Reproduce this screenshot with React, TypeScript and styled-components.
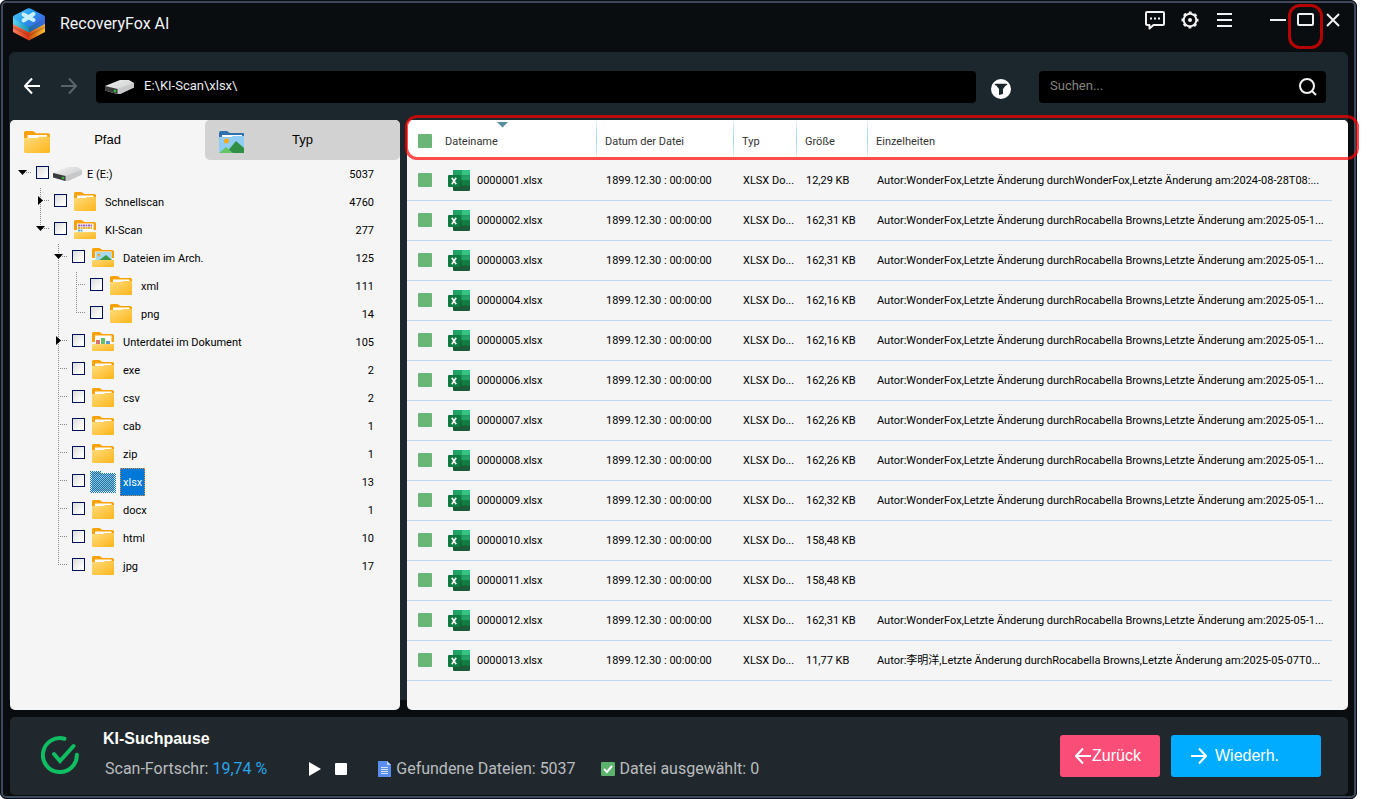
import React from 'react';
import styled, { createGlobalStyle, css } from 'styled-components';

const tahoma = 'Tahoma, Roboto, "Noto Sans CJK SC", sans-serif';
const arial = '"Liberation Sans", Arial, sans-serif';

const GlobalStyle = createGlobalStyle`
  *, *::before, *::after { box-sizing: border-box; }
  body { margin: 0; background: #fff; font-family: ${tahoma}; font-size: 11px; line-height: 14px; color: #000; }
  button, input { font: inherit; margin: 0; }
  svg { display: block; flex: none; }
`;

const Window = styled.div`
  display: flex;
  flex-direction: column;
  min-height: 100vh;
  margin-right: 42px;
  padding: 0 8px 0 7px;
  background: #090d10;
  border: 1px solid #0a0d14;
  border-radius: 6px;
  box-shadow: inset 0 0 0 2px #3e495c;
`;

const TitleBar = styled.header`
  display: flex;
  align-items: center;
  height: 51px;
  padding: 0 6px 5px 4px;
`;

const AppName = styled.h1`
  flex: 1;
  margin: 0 0 0 14px;
  font: 400 16px/20px Roboto, sans-serif;
  color: #f2f4f6;
`;

const WindowTools = styled.div`
  display: flex;
  align-items: center;
  gap: 15px;
  padding-bottom: 9px;
`;

const WindowButtons = styled.div`
  display: flex;
  align-items: center;
  gap: 9px;
  margin-left: 34px;
  padding-bottom: 9px;
`;

const IconButton = styled.button<{ $w?: number }>`
  position: relative;
  display: grid;
  place-items: center;
  flex: none;
  width: ${(p) => p.$w ?? 20}px;
  height: 20px;
  padding: 0;
  border: 0;
  background: transparent;
  color: #f2f2f2;
`;

const mark = css`
  position: absolute;
  border: 3px solid rgba(255, 0, 0, 0.7);
  border-radius: 12px;
  pointer-events: none;
`;

const ButtonMark = styled.span`
  ${mark}
  inset: -6px -8px -19px;
`;

const HeaderMark = styled.span`
  ${mark}
  top: -5px;
  left: -2px;
  right: -11px;
  height: 45px;
`;

const Body = styled.main`
  display: flex;
  flex-direction: column;
  flex: 1;
  margin-left: 1px;
  background: linear-gradient(#1b262d, #1b262d) top / 100% calc(100% - 10px) no-repeat;
  border-radius: 6px 6px 0 0;
`;

const Toolbar = styled.div`
  display: flex;
  align-items: center;
  height: 68px;
  padding: 2px 22px 0 13px;
`;

const NavButton = styled(IconButton)<{ $dim?: boolean }>`
  margin: 0 17px 2px 0;
  color: ${(p) => (p.$dim ? '#59636b' : '#fff')};
`;

const Field = styled.div<{ $grow: number }>`
  display: flex;
  align-items: center;
  flex: ${(p) => `${p.$grow} 1 ${p.$grow}px`};
  min-width: 0;
  height: 32px;
  padding: 0 8px;
  border-radius: 4px;
  background: #000;
`;

const FieldInput = styled.input`
  flex: 1;
  min-width: 0;
  height: 24px;
  padding: 0 0 4px;
  border: 0;
  outline: 0;
  background: transparent;
  font-size: 13px;
  color: #e8ecef;
  &::placeholder { color: #85837c; opacity: 1; }
`;

const PathField = styled(Field)`
  padding-left: 9px;
  ${FieldInput} { margin-left: 8px; }
`;

const SearchField = styled(Field)`
  padding-left: 11px;
`;

const FilterButton = styled(IconButton)`
  margin: 3px 28px 0 15px;
`;

const Panels = styled.div`
  display: flex;
  flex: 1;
  gap: 7px;
`;

const TreePanel = styled.section`
  flex: none;
  width: 390px;
  margin-left: 1px;
  border-radius: 5px;
  background: #f5f5f5;
`;

const Tabs = styled.div`
  display: flex;
  height: 40px;
`;

const Tab = styled.button<{ $on?: boolean }>`
  position: relative;
  flex: 1;
  padding: 0;
  border: 0;
  border-radius: 5px;
  background: ${(p) => (p.$on ? '#f5f5f5' : '#d2d2d2')};
  font: 400 13px/20px ${arial};
  color: #000;
  display: grid;
  grid-template-columns: 40px 1fr 40px;
  align-items: center;
  justify-items: center;
  svg { justify-self: end; margin-top: 4px; }
`;

const Tree = styled.ul`
  margin: 0;
  padding: 0 26px 0 4px;
  list-style: none;
`;

const TreeRow = styled.li`
  display: flex;
  align-items: center;
  height: 28px;
`;

const Guide = styled.span<{ $line?: 'through' | 'end'; $dash?: boolean }>`
  position: relative;
  flex: none;
  width: 18px;
  height: 28px;
  &::before {
    content: '';
    display: ${(p) => (p.$line ? 'block' : 'none')};
    position: absolute;
    left: 8px;
    top: 0;
    width: 1px;
    height: ${(p) => (p.$line === 'end' ? 13 : 28)}px;
    background: repeating-linear-gradient(#8c8c8c 0 1px, transparent 1px 2px);
  }
  &::after {
    content: '';
    display: ${(p) => (p.$dash ? 'block' : 'none')};
    position: absolute;
    left: 8px;
    top: 12px;
    width: 10px;
    height: 1px;
    background: repeating-linear-gradient(90deg, #8c8c8c 0 1px, transparent 1px 2px);
  }
  svg { position: absolute; left: 4px; top: 7px; z-index: 1; }
`;

const TreeCheck = styled.input`
  appearance: none;
  flex: none;
  width: 13px;
  height: 13px;
  margin: 0 4px 3px;
  border: 1px solid #00105c;
  background: linear-gradient(135deg, #dcdcda, #fff 85%);
`;

const TreeLabel = styled.label<{ $on?: boolean }>`
  height: 28px;
  padding: 0 3px;
  line-height: 29px;
  white-space: nowrap;
  ${(p) =>
    p.$on &&
    css`
      background: #0078d7;
      color: #fff;
      outline: 1px dotted #e08a3c;
      outline-offset: -1px;
    `}
`;

const Count = styled.span`
  margin-left: auto;
  height: 28px;
  line-height: 29px;
`;

const FilePanel = styled.section`
  position: relative;
  flex: 1;
  min-width: 0;
  border-radius: 5px;
  background: #f5f5f5;
`;

const Table = styled.table`
  width: 100%;
  table-layout: fixed;
  border-collapse: separate;
  border-spacing: 0;
`;

const Col = styled.col<{ $w?: number }>`
  width: ${(p) => (p.$w ? `${p.$w}px` : 'auto')};
`;

const HeadCell = styled.th<{ $divided?: boolean }>`
  position: relative;
  height: 41px;
  padding: 2px 0 0 ${(p) => (p.$divided ? 8 : 0)}px;
  background: linear-gradient(#fff, #fff) top / 100% 39px no-repeat;
  font-weight: 400;
  text-align: left;
  color: #333;
  &:first-child { border-top-left-radius: 5px; }
  &:last-child { border-top-right-radius: 5px; }
  &::before {
    content: '';
    display: ${(p) => (p.$divided ? 'block' : 'none')};
    position: absolute;
    left: -1px;
    top: 1px;
    width: 1px;
    height: 36px;
    background: linear-gradient(#e4f3fa, #9fd3ea 50%, #e4f3fa);
  }
`;

const SortMark = styled.svg`
  position: absolute;
  top: 2px;
  left: 52px;
`;

const Cell = styled.td`
  height: 40px;
  padding: 0 0 0 9px;
  border-bottom: 1px solid #c0d8f4;
  white-space: nowrap;
  &:first-child, &:nth-child(2) { padding-left: 0; }
`;

const RowCheck = styled.input`
  appearance: none;
  display: block;
  width: 14px;
  height: 14px;
  margin: 0 0 1px 11px;
  border-radius: 1px;
  background: #6bb577;
`;

const FileName = styled.label`
  display: flex;
  align-items: center;
  gap: 7px;
  padding-left: 3px;
`;

const Footer = styled.footer`
  display: flex;
  align-items: center;
  height: 78px;
  margin: 7px 0 3px 2px;
  padding: 0 27px 0 31px;
  border-radius: 5px;
  background: #21282d;
  > svg { margin-bottom: 2px; }
`;

const Status = styled.div`
  flex: 1;
  margin-left: 24px;
  padding-bottom: 5px;
  font: 400 16px/24px Roboto, sans-serif;
  color: #b9bcbe;
  white-space: nowrap;
`;

const StatusTitle = styled.h2`
  margin: 0 0 6px;
  font: 700 16px/24px ${arial};
  color: #fff;
`;

const StatusLine = styled.div`
  display: flex;
  align-items: center;
  padding-left: 2px;
`;

const Percent = styled.span`
  margin-left: 4px;
  color: #2ba3ea;
`;

const ScanControls = styled.div`
  display: flex;
  gap: 6px;
  margin: 0 26px 0 38px;
`;

const Stat = styled.span`
  display: flex;
  align-items: center;
  gap: 5px;
  & + & { margin-left: 25px; }
`;

const ActionButton = styled.button<{ $tone: string; $w: number; $gap: number; $pad: number }>`
  display: flex;
  align-items: center;
  gap: ${(p) => p.$gap}px;
  width: ${(p) => p.$w}px;
  height: 42px;
  margin-left: 11px;
  padding: 0 0 0 ${(p) => p.$pad}px;
  border: 0;
  border-radius: 3px;
  background: ${(p) => p.$tone};
  font-family: ${arial};
  font-size: 16px;
  color: #fff;
`;

const Logo = () => (
  <svg width="34" height="34" viewBox="0 0 34 34" aria-hidden="true">
    <defs>
      <linearGradient id="lgTop" x1="0" y1="0" x2="1" y2="0.6">
        <stop offset="0" stopColor="#5cc4f6" />
        <stop offset="0.55" stopColor="#1f9df0" />
        <stop offset="1" stopColor="#4463e0" />
      </linearGradient>
      <linearGradient id="lgMid" x1="0" x2="1">
        <stop offset="0" stopColor="#5ad5f2" />
        <stop offset="0.5" stopColor="#1590b0" />
        <stop offset="0.51" stopColor="#1e6f9c" />
        <stop offset="1" stopColor="#3e66e0" />
      </linearGradient>
      <linearGradient id="lgLow" x1="0" x2="1">
        <stop offset="0" stopColor="#f98060" />
        <stop offset="0.5" stopColor="#dc3210" />
        <stop offset="0.51" stopColor="#d24a10" />
        <stop offset="1" stopColor="#f8c334" />
      </linearGradient>
    </defs>
    <path d="M1 17H33V25L17 33.500 1 25Z" fill="url(#lgLow)" />
    <path d="M1 19 17 27.500 33 19V21L17 29.500 1 21Z" fill="#8f2f16" opacity=".35" />
    <path d="M1 10H33V17L17 25.500 1 17Z" fill="url(#lgMid)" />
    <path d="M15.500 1.500Q17 .8 18.500 1.500L32 8.500Q34 10 32 11.500L18.500 19.500Q17 20.300 15.500 19.500L2 11.500Q0 10 2 8.500Z" fill="url(#lgTop)" />
    <path d="M11.500 7.500 21.500 13M21.500 7 11.500 13.500" stroke="#c8f0ff" strokeWidth="4" strokeLinecap="round" />
  </svg>
);

const ChatIcon = () => (
  <svg width="20" height="20" viewBox="0 0 20 20" fill="none" stroke="currentColor" strokeWidth="2" aria-hidden="true">
    <path d="M2 2H18Q19 2 19 3V14Q19 15 18 15H8.500L4.500 18.500V15H2Q1 15 1 14V3Q1 2 2 2Z" strokeLinejoin="round" />
    <path d="M5 8.500h2M9 8.500h2M13 8.500h2" />
  </svg>
);

const GearIcon = () => (
  <svg width="18" height="18" viewBox="0 0 18 18" fill="none" stroke="currentColor" aria-hidden="true">
    <circle cx="9" cy="9" r="6.300" strokeWidth="2" />
    <circle cx="9" cy="9" r="7.500" strokeWidth="2" strokeDasharray="3 2.890" strokeDashoffset="1.500" />
    <circle cx="9" cy="9" r="2" fill="currentColor" stroke="none" />
  </svg>
);

const ArrowIcon = ({ right }: { right?: boolean }) => (
  <svg width="16" height="18" viewBox="0 0 16 18" fill="none" stroke="currentColor" strokeWidth="2" aria-hidden="true">
    <path d={right ? 'M0 9H15M8 1.500 15 9 8 16.500' : 'M16 9H1M8 1.500 1 9 8 16.500'} />
  </svg>
);

const DriveIcon = () => (
  <svg width="31" height="16" viewBox="0 0 31 16" aria-hidden="true">
    <defs>
      <linearGradient id="drv" x1="0" y1="0" x2="1" y2="1">
        <stop offset="0" stopColor="#f2f2f2" />
        <stop offset="1" stopColor="#c4c5c7" />
      </linearGradient>
    </defs>
    <path d="M0 7 15 1H24L29 4V8.500L15 15H12L0 11.500Z" fill="url(#drv)" />
    <path d="M0 7 12.500 10 29 4V8.500L15 15H12Z" fill="#c6c8ca" />
    <path d="M0 7 12.500 10V15L0 11.500Z" fill="#3a3c3d" />
    <circle cx="10" cy="12" r="1.300" fill="#2fc02f" />
  </svg>
);

type FolderKind = 'plain' | 'grid' | 'photo' | 'chart' | 'selected';

/* Selection checkerboard laid over a folder, one dotted line per pixel row. */
const Checkerboard = () => (
  <g stroke="#0078d7" strokeDasharray="1 1" shapeRendering="crispEdges">
    {Array.from({ length: 22 }, (_, row) => (
      <path key={row} d={`M${-2 + (row % 2)} ${row - 0.5}H${row < 2 ? 9 : 24}`} />
    ))}
  </g>
);

const FolderShapes = ({ kind }: { kind: FolderKind }) => {
  const tall = kind === 'grid' || kind === 'photo' || kind === 'chart';
  return (
    <>
      <defs>
        <linearGradient id="fold" x1="0" y1="0" x2="1" y2="1">
          <stop offset="0" stopColor="#ffdc7c" />
          <stop offset="1" stopColor="#fdb51b" />
        </linearGradient>
      </defs>
      <path d="M0 1.500Q0 0 1.500 0H7Q8 0 9 1L10.500 2H20.500Q22 2 22 3.500V10H0Z" fill="#f7a20b" />
      <rect x="3" y="3.500" width="16.500" height={tall ? 9 : 4} fill="#fff" />
      {kind === 'grid' && (
        <>
          <path d="M4 5.500H18" stroke="#9a63b8" strokeWidth="2" strokeDasharray="2 .500" />
          <path d="M4 8H18" stroke="#e2b33c" strokeWidth="2" strokeDasharray="2 .500" />
          <path d="M4 10.500H9" stroke="#5fa8d8" strokeWidth="2" strokeDasharray="2 .500" />
        </>
      )}
      {kind === 'photo' && (
        <>
          <rect x="3.500" y="4" width="16" height="9" fill="#a5d8f3" />
          <path d="M6 13 14 7 20 12V13Z" fill="#3a9a4a" />
          <circle cx="7" cy="7" r="1.500" fill="#f2a625" />
        </>
      )}
      {kind === 'chart' && (
        <>
          <rect x="4" y="8" width="4" height="5" fill="#d9756f" />
          <rect x="9" y="6" width="4" height="7" fill="#63c067" />
          <rect x="14" y="9" width="4" height="4" fill="#5f93cf" />
        </>
      )}
      <path
        d={tall ? 'M0 12H22V18Q22 19 21 19H1Q0 19 0 18Z' : 'M0 6H11L13 5H22V18Q22 19 21 19H1Q0 19 0 18Z'}
        fill="url(#fold)"
      />
      {kind === 'selected' && (
        <>
          <path d="M0 0H8L10.500 2H22V19H0Z" fill="#7fb4c8" opacity=".75" />
          <Checkerboard />
        </>
      )}
    </>
  );
};

const FolderIcon = ({ kind }: { kind: FolderKind }) => (
  <svg width="31" height="24" viewBox="-3 -2 31 24" aria-hidden="true">
    <FolderShapes kind={kind} />
  </svg>
);

const PhotoFolderIcon = () => (
  <svg width="26" height="23" viewBox="0 0 26 23" aria-hidden="true">
    <path d="M0 2Q0 0 2 0H8L11 2H24Q25 2 25 3V8H0Z" fill="#3070ad" />
    <rect x="3" y="4" width="20" height="4" fill="#fff" />
    <path d="M0 6H12L14 5H25V22H0Z" fill="#8fcdf5" />
    <circle cx="7.500" cy="10" r="2.500" fill="#f7a81c" />
    <path d="M7 22 17 10 25 17V22Z" fill="#2f8f43" />
    <path d="M0 22 7 16 14 22Z" fill="#64c466" />
  </svg>
);

const ExcelIcon = () => (
  <svg width="22" height="21" viewBox="0 0 22 21" aria-hidden="true">
    <rect x="5" width="17" height="21" rx="1" fill="#1a5c38" />
    <path d="M6 0H13.500V5.500H5V1Q5 0 6 0Z" fill="#21a366" />
    <path d="M13.500 0H21Q22 0 22 1V5.500H13.500Z" fill="#33c481" />
    <rect x="5" y="5.500" width="8.500" height="5" fill="#107c41" />
    <rect x="13.500" y="5.500" width="8.500" height="5" fill="#21a366" />
    <rect x="13.500" y="10.500" width="8.500" height="5" fill="#107c41" />
    <rect x="0" y="5" width="12" height="12" rx="1" fill="#0f7a40" />
    <path d="M3.800 7.800 8.200 14.200M8.200 7.800 3.800 14.200" stroke="#fff" strokeWidth="1.600" />
  </svg>
);

const SuccessIcon = () => (
  <svg width="38" height="38" viewBox="0 0 38 38" fill="none" stroke="#0fbd62" strokeWidth="4" strokeLinecap="round" aria-hidden="true">
    <path d="M23.500 2.700A17 17 0 1 0 35.900 18.800" />
    <path d="M13 18 19 25 32.500 10" />
  </svg>
);

interface Node {
  label: string;
  count: number;
  depth: number;
  line?: 'through' | 'end';
  toggle?: 'open' | 'closed';
  icon: FolderKind | 'drive';
  selected?: boolean;
}

const nodes: Node[] = [
  { label: 'E (E:)', count: 5037, depth: 0, toggle: 'open', icon: 'drive' },
  { label: 'Schnellscan', count: 4760, depth: 1, line: 'through', toggle: 'closed', icon: 'plain' },
  { label: 'KI-Scan', count: 277, depth: 1, line: 'end', toggle: 'open', icon: 'grid' },
  { label: 'Dateien im Arch.', count: 125, depth: 2, line: 'through', toggle: 'open', icon: 'photo' },
  { label: 'xml', count: 111, depth: 3, line: 'through', icon: 'plain' },
  { label: 'png', count: 14, depth: 3, line: 'end', icon: 'plain' },
  { label: 'Unterdatei im Dokument', count: 105, depth: 2, line: 'through', toggle: 'closed', icon: 'chart' },
  { label: 'exe', count: 2, depth: 2, line: 'through', icon: 'plain' },
  { label: 'csv', count: 2, depth: 2, line: 'through', icon: 'plain' },
  { label: 'cab', count: 1, depth: 2, line: 'through', icon: 'plain' },
  { label: 'zip', count: 1, depth: 2, line: 'through', icon: 'plain' },
  { label: 'xlsx', count: 13, depth: 2, line: 'through', icon: 'selected', selected: true },
  { label: 'docx', count: 1, depth: 2, line: 'through', icon: 'plain' },
  { label: 'html', count: 10, depth: 2, line: 'through', icon: 'plain' },
  { label: 'jpg', count: 17, depth: 2, line: 'end', icon: 'plain' },
];

const rocabella = 'Autor:WonderFox,Letzte Änderung durchRocabella Browns,Letzte Änderung am:2025-05-1...';

const files: [string, string][] = [
  ['12,29 KB', 'Autor:WonderFox,Letzte Änderung durchWonderFox,Letzte Änderung am:2024-08-28T08:...'],
  ['162,31 KB', rocabella],
  ['162,31 KB', rocabella],
  ['162,16 KB', rocabella],
  ['162,16 KB', rocabella],
  ['162,26 KB', rocabella],
  ['162,26 KB', rocabella],
  ['162,26 KB', rocabella],
  ['162,32 KB', rocabella],
  ['158,48 KB', ''],
  ['158,48 KB', ''],
  ['162,31 KB', rocabella],
  ['11,77 KB', 'Autor:李明洋,Letzte Änderung durchRocabella Browns,Letzte Änderung am:2025-05-07T0...'],
];

const TreeItem = ({ node }: { node: Node }) => {
  const id = `node-${node.label.replace(/\W+/g, '-')}`;
  const insideOpenBranch = node.depth === 3;
  return (
    <TreeRow>
      {Array.from({ length: node.depth }, (_, level) => (
        <Guide key={level} $line={insideOpenBranch && level === 2 ? 'through' : undefined} />
      ))}
      <Guide $line={node.line} $dash>
        {node.toggle && (
          <svg width="10" height="11" viewBox="0 0 10 11" aria-hidden="true">
            <path d={node.toggle === 'open' ? 'M0 3H9L4.500 8Z' : 'M2 1V10L7 5.500Z'} />
          </svg>
        )}
      </Guide>
      <TreeCheck type="checkbox" id={id} />
      {node.icon === 'drive' ? <DriveIcon /> : <FolderIcon kind={node.icon} />}
      <TreeLabel htmlFor={id} $on={node.selected}>{node.label}</TreeLabel>
      <Count>{node.count}</Count>
    </TreeRow>
  );
};

export default function App() {
  return (
    <>
      <GlobalStyle />
      <Window>
        <TitleBar>
          <Logo />
          <AppName>RecoveryFox AI</AppName>
          <WindowTools>
            <IconButton aria-label="Feedback"><ChatIcon /></IconButton>
            <IconButton aria-label="Einstellungen"><GearIcon /></IconButton>
            <IconButton aria-label="Menü">
              <svg width="16" height="14" viewBox="0 0 16 14" stroke="currentColor" strokeWidth="2"><path d="M0 1H15M0 7H15M0 13H15" /></svg>
            </IconButton>
          </WindowTools>
          <WindowButtons>
            <IconButton $w={18} aria-label="Minimieren">
              <svg width="16" height="2" viewBox="0 0 16 2" stroke="currentColor" strokeWidth="2"><path d="M0 1H16" /></svg>
            </IconButton>
            <IconButton $w={19} aria-label="Maximieren">
              <svg width="17" height="13" viewBox="0 0 17 13" fill="none" stroke="currentColor" strokeWidth="2"><rect x="1" y="1" width="15" height="11" rx="1" /></svg>
              <ButtonMark />
            </IconButton>
            <IconButton $w={18} aria-label="Schließen">
              <svg width="14" height="14" viewBox="0 0 14 14" stroke="currentColor" strokeWidth="2"><path d="M1 1 13 13M13 1 1 13" /></svg>
            </IconButton>
          </WindowButtons>
        </TitleBar>

        <Body>
          <Toolbar>
            <NavButton aria-label="Zurück"><ArrowIcon /></NavButton>
            <NavButton $dim aria-label="Vor"><ArrowIcon right /></NavButton>
            <PathField $grow={880}>
              <DriveIcon />
              <FieldInput aria-label="Pfad" defaultValue="E:\KI-Scan\xlsx\" />
            </PathField>
            <FilterButton aria-label="Filter">
              <svg width="20" height="20" viewBox="0 0 20 20">
                <circle cx="10" cy="10" r="10" fill="#fff" />
                <path d="M4.500 5.500H15.500L12 10V15L8 16V10Z" fill="#1b262d" />
                <path d="M4.500 5.500H15.500" stroke="#1b262d" strokeWidth="1.500" strokeLinecap="round" />
              </svg>
            </FilterButton>
            <SearchField $grow={287}>
              <FieldInput aria-label="Suchen" placeholder="Suchen..." />
              <IconButton aria-label="Suche starten">
                <svg width="18" height="18" viewBox="0 0 18 18" fill="none" stroke="currentColor" strokeWidth="2">
                  <circle cx="8" cy="8" r="7" />
                  <path d="M13 13 17 17" />
                </svg>
              </IconButton>
            </SearchField>
          </Toolbar>

          <Panels>
            <TreePanel>
              <Tabs>
                <Tab $on>
                  <svg width="26" height="22" viewBox="0 0 22 19" preserveAspectRatio="none" aria-hidden="true"><FolderShapes kind="plain" /></svg>
                  Pfad
                </Tab>
                <Tab>
                  <PhotoFolderIcon />
                  Typ
                </Tab>
              </Tabs>
              <Tree>
                {nodes.map((node) => <TreeItem key={node.label} node={node} />)}
              </Tree>
            </TreePanel>

            <FilePanel>
              <Table>
                <colgroup>
                  <Col $w={38} />
                  <Col $w={152} />
                  <Col $w={137} />
                  <Col $w={63} />
                  <Col $w={71} />
                  <Col />
                  <Col $w={16} />
                </colgroup>
                <thead>
                  <tr>
                    <HeadCell scope="col"><RowCheck type="checkbox" aria-label="Alle auswählen" /></HeadCell>
                    <HeadCell scope="col">
                      Dateiname
                      <SortMark width="11" height="6" viewBox="0 0 11 6" aria-hidden="true"><path d="M0 0H11L5.500 5.500Z" fill="#568e9c" /></SortMark>
                    </HeadCell>
                    <HeadCell scope="col" $divided>Datum der Datei</HeadCell>
                    <HeadCell scope="col" $divided>Typ</HeadCell>
                    <HeadCell scope="col" $divided>Größe</HeadCell>
                    <HeadCell scope="col" colSpan={2} $divided>Einzelheiten</HeadCell>
                  </tr>
                </thead>
                <tbody>
                  {files.map(([size, details], i) => {
                    const name = `${String(i + 1).padStart(7, '0')}.xlsx`;
                    return (
                      <tr key={name}>
                        <Cell><RowCheck type="checkbox" id={name} /></Cell>
                        <Cell><FileName htmlFor={name}><ExcelIcon />{name}</FileName></Cell>
                        <Cell>1899.12.30 : 00:00:00</Cell>
                        <Cell>XLSX Do...</Cell>
                        <Cell>{size}</Cell>
                        <Cell>{details}</Cell>
                      </tr>
                    );
                  })}
                </tbody>
              </Table>
              <HeaderMark />
            </FilePanel>
          </Panels>
        </Body>

        <Footer>
          <SuccessIcon />
          <Status>
            <StatusTitle>KI-Suchpause</StatusTitle>
            <StatusLine>
              Scan-Fortschr:<Percent>19,74 %</Percent>
              <ScanControls>
                <IconButton aria-label="Fortsetzen">
                  <svg width="14" height="14" viewBox="0 0 14 14" fill="#fff"><path d="M1 0 13 7 1 14Z" /></svg>
                </IconButton>
                <IconButton aria-label="Stopp">
                  <svg width="12" height="12" viewBox="0 0 12 12" fill="#fff"><rect width="12" height="12" rx="1" /></svg>
                </IconButton>
              </ScanControls>
              <Stat>
                <svg width="14" height="16" viewBox="0 0 14 16" aria-hidden="true">
                  <path d="M1 0H10L14 4V16H1Z" fill="#5a8df0" />
                  <path d="M10 0 14 4H10Z" fill="#c3d6fb" />
                  <path d="M4 6.500H11M4 8.500H11M4 10.500H11M4 12.500H11" stroke="#d5e2fd" />
                </svg>
                Gefundene Dateien: 5037
              </Stat>
              <Stat>
                <svg width="14" height="14" viewBox="0 0 14 14" aria-hidden="true">
                  <rect width="14" height="14" rx="1" fill="#5cb36c" />
                  <path d="M3 7 6 10 11 4" fill="none" stroke="#fff" strokeWidth="2" />
                </svg>
                Datei ausgewählt: 0
              </Stat>
            </StatusLine>
          </Status>
          <ActionButton $tone="#fa4e78" $w={100} $gap={1} $pad={15}><ArrowIcon />Zurück</ActionButton>
          <ActionButton $tone="#00acff" $w={150} $gap={8} $pad={20}><ArrowIcon right />Wiederh.</ActionButton>
        </Footer>
      </Window>
    </>
  );
}
